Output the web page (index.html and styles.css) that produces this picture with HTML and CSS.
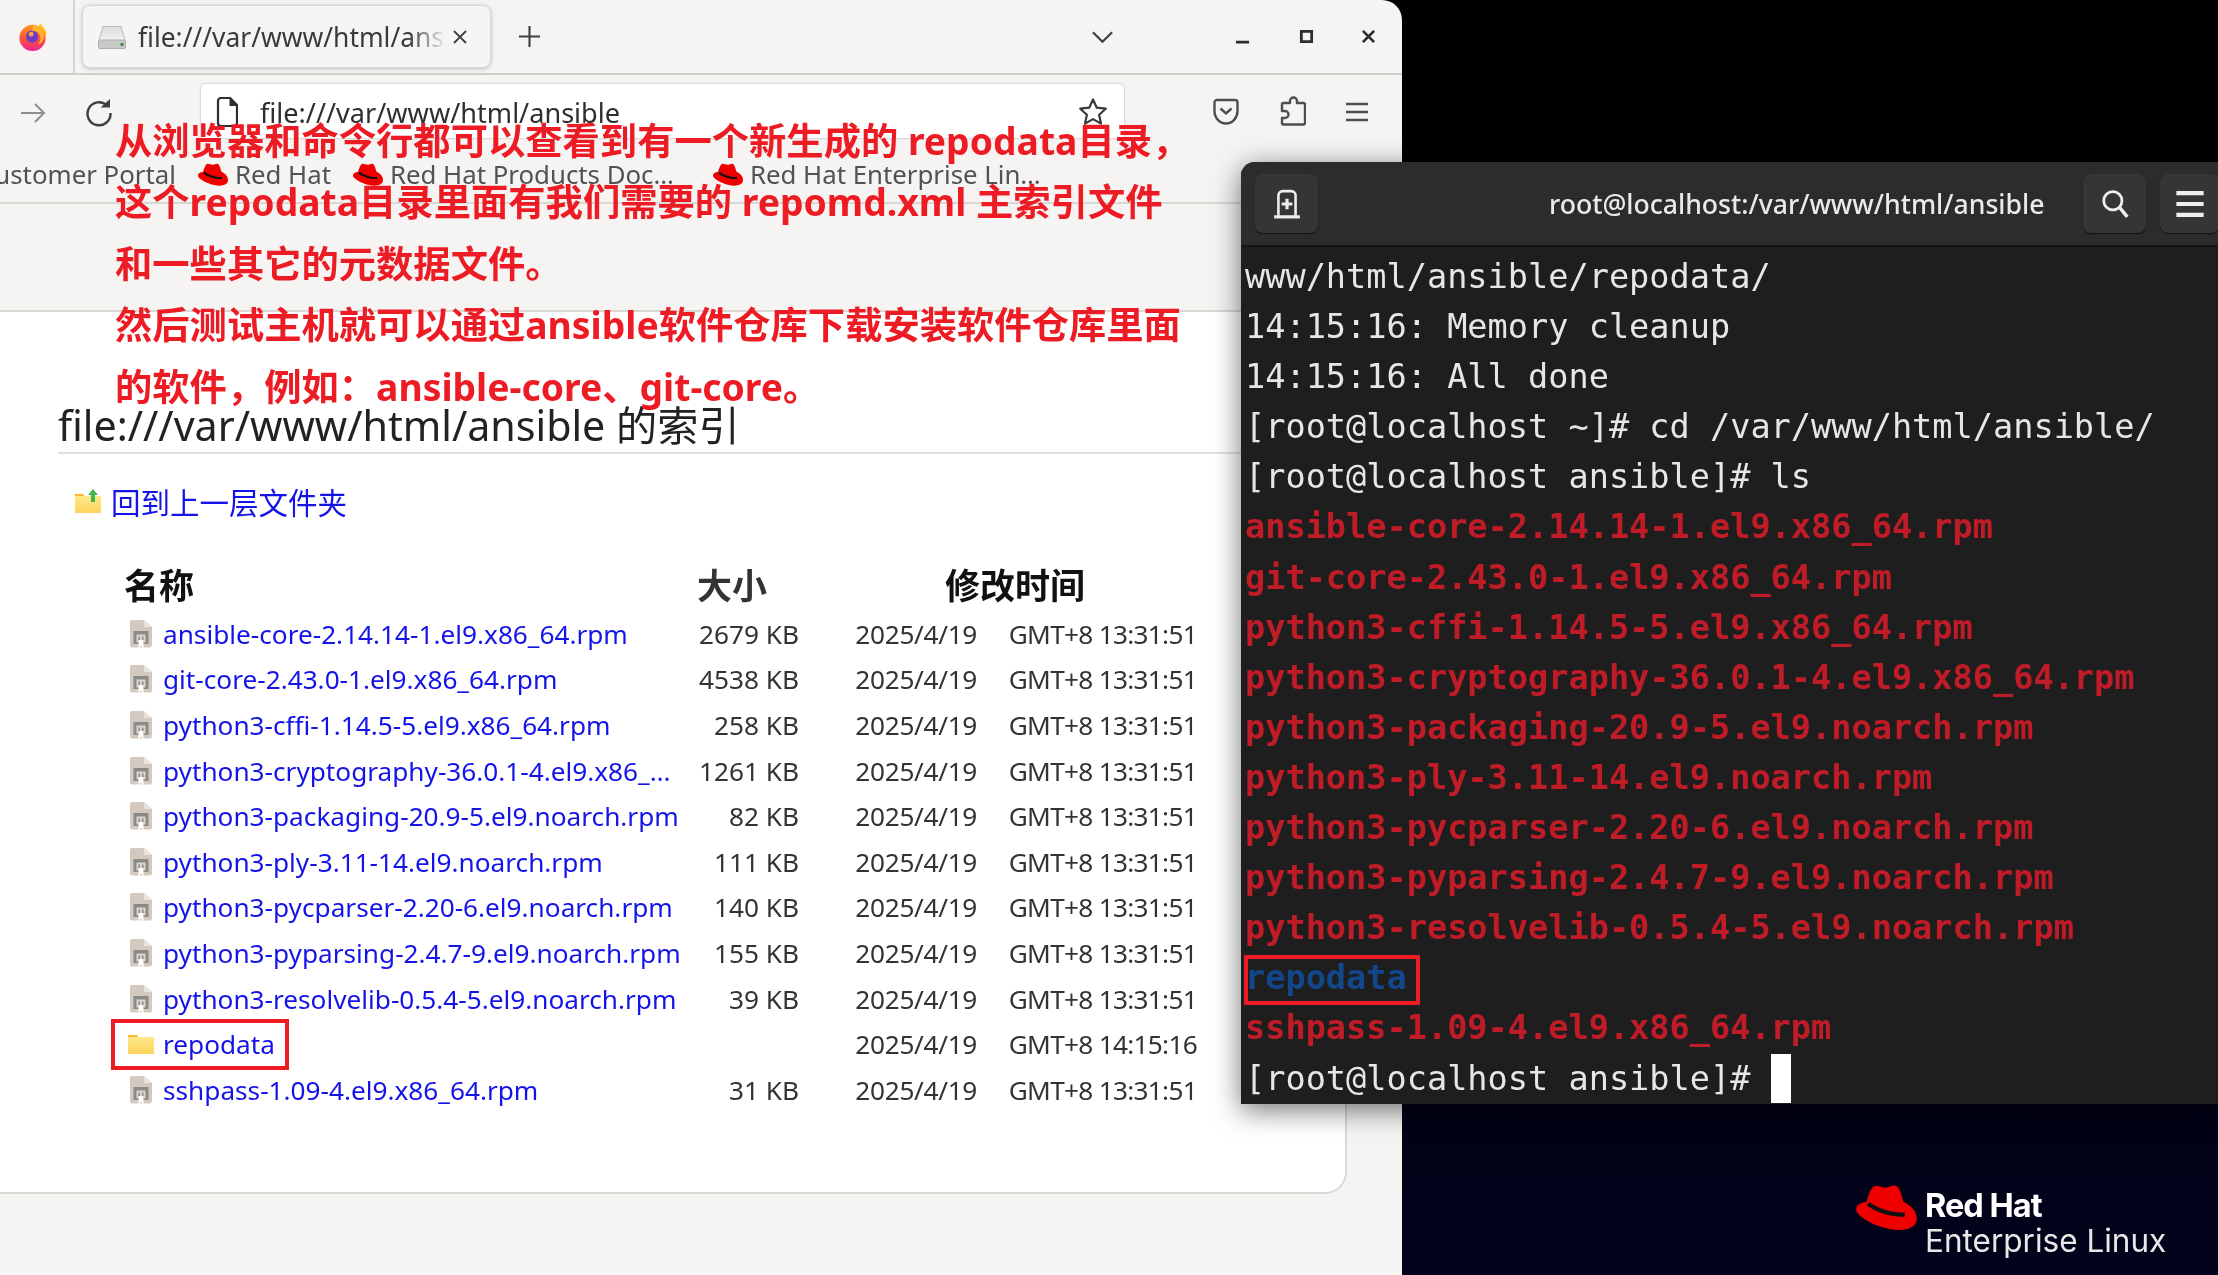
FILE: index.html
```html
<!DOCTYPE html>
<html lang="zh">
<head>
<meta charset="utf-8">
<title>file:///var/www/html/ansible</title>
<link rel="stylesheet" href="styles.css">
</head>
<body>
<svg class="defs" width="0" height="0" aria-hidden="true">
  <defs>
    <linearGradient id="fxBody" x1="0" y1="0" x2="0" y2="1"><stop offset="0" stop-color="#ff9a1f"/><stop offset=".55" stop-color="#ff4f3a"/><stop offset="1" stop-color="#e8259a"/></linearGradient>
    <linearGradient id="folderFill" x1="0" y1="0" x2="0" y2="1"><stop offset="0" stop-color="#ffe98a"/><stop offset="1" stop-color="#fdd35c"/></linearGradient>
    <linearGradient id="driveFill" x1="0" y1="0" x2="0" y2="1"><stop offset="0" stop-color="#dcdcda"/><stop offset="1" stop-color="#f1f1ef"/></linearGradient>
    <symbol id="hat" viewBox="0 0 182 135">
      <path fill="#ee0000" d="M52 5C62-2 75 8 88 8c12 0 20-8 30-6 12 2 18 28 24 48 18 10 40 25 40 52 0 20-22 33-52 33-40 0-90-20-115-40C5 87 0 80 0 72c0-12 15-20 30-20C38 30 42 12 52 5z"/>
      <path fill="none" stroke="#111" stroke-width="13" d="M36 56c25 20 72 36 110 32"/>
    </symbol>
    <symbol id="rpm" viewBox="0 0 24 30">
      <path fill="#d3c9bf" d="M1 2.500 2.500 1H15l8 7v19l-1.500 1.500h-19L1 27z"/>
      <path fill="#e9e3dc" d="M15 1v7h8z"/>
      <path fill="#8a8a88" d="M4.500 12h15v13h-15z"/>
      <path fill="#d9d6d2" d="M7.500 15.500h9v8h-2v-6h-1.500v6h-2v-6H9.500v6h-2z"/>
      <path fill="#fff" d="M9.500 21h5v9h-1.500v-3h-2v3H9.500z"/>
    </symbol>
  </defs>
</svg>

<div class="desktop">
  <section class="browser">
    <header class="tabbar">
      <div class="fx-cell">
        <svg class="fx" viewBox="0 0 32 32"><path fill="#ffc928" d="M23 1c4 3 7 7 8 12l-8 2-3-6c2-3 3-5 3-8z"/><circle cx="15.500" cy="17" r="14" fill="url(#fxBody)"/><circle cx="15" cy="15.500" r="6.500" fill="#6a3cc8"/><path fill="#ffb32a" d="M15 4c6-1 12 3 13 10 0 5-3 9-7 10 3-3 4-7 2-11-2-3-5-4-8-3 1-2 1-4 0-6z"/><circle cx="14" cy="13" r="2.600" fill="#f7a134"/></svg>
      </div>
      <div class="tab">
        <svg class="drive" viewBox="0 0 28 24"><path fill="url(#driveFill)" stroke="#b9b9b7" d="M5 1.500h18l4 14H1z"/><rect x=".5" y="15" width="27" height="8.500" rx="1.500" fill="#c9c9c7" stroke="#adadab"/><rect x="22.500" y="18" width="3" height="3" fill="#3f8f3f"/></svg>
        <span class="tab-title">file:///var/www/html/ansible</span>
        <svg class="ic-close" viewBox="0 0 16 16"><path d="M2 2l12 12M14 2 2 14" stroke="#3f3f3f" stroke-width="1.800" fill="none"/></svg>
      </div>
      <svg class="plus" viewBox="0 0 24 24"><path d="M12 1v22M1 12h22" stroke="#3f3f3f" stroke-width="2.200" fill="none"/></svg>
      <div class="grow"></div>
      <svg class="chev" viewBox="0 0 24 14"><path d="M2 2l10 10L22 2" stroke="#3f3f3f" stroke-width="2.200" fill="none"/></svg>
      <div class="winbtns">
        <svg viewBox="0 0 16 16"><path d="M1 14h14" stroke="#2e2e2e" stroke-width="3" fill="none"/></svg>
        <svg viewBox="0 0 16 16"><path d="M2.500 2.500h11v11h-11z" stroke="#2e2e2e" stroke-width="3" fill="none"/></svg>
        <svg viewBox="0 0 16 16"><path d="M2 2l12 12M14 2 2 14" stroke="#2e2e2e" stroke-width="3" fill="none"/></svg>
      </div>
    </header>

    <nav class="toolbar">
      <svg class="nav-ic fwd" viewBox="0 0 26 24"><path d="M1 12h23M15 3l9 9-9 9" stroke="#8e8e8c" stroke-width="2" fill="none"/></svg>
      <svg class="nav-ic reload" viewBox="0 0 28 28"><path d="M22 6.500A11.500 11.500 0 1 0 25.500 14" stroke="#3f3f3f" stroke-width="2.400" fill="none"/><path d="M15.500 8.500h9.500V0z" fill="#3f3f3f"/></svg>
      <div class="urlbar">
        <svg class="page-ic" viewBox="0 0 22 30"><path d="M2 4a3 3 0 0 1 3-3h9l7 7v18a3 3 0 0 1-3 3H5a3 3 0 0 1-3-3z" fill="#fff" stroke="#2e2e2e" stroke-width="2.200"/><path d="M13.500 1v8h8z" fill="#2e2e2e"/></svg>
        <span class="url-text">file:///var/www/html/ansible</span>
        <svg class="star" viewBox="0 0 30 30"><path d="M15 2.500l3.800 8.200 9 1-6.700 6 1.900 8.900-8-4.500-8 4.500 1.900-8.900-6.700-6 9-1z" fill="#fff" stroke="#3a3a3a" stroke-width="2.200" stroke-linejoin="round"/></svg>
      </div>
      <svg class="pocket" viewBox="0 0 26 28"><path d="M1.500 4.500a2.500 2.500 0 0 1 2.500-2.500h18a2.500 2.500 0 0 1 2.500 2.500V13a11.500 12.500 0 0 1-23 0z" fill="none" stroke="#4a4f54" stroke-width="2.400"/><path d="M7.500 10.500l5.500 5 5.500-5" fill="none" stroke="#4a4f54" stroke-width="2.400"/></svg>
      <svg class="puzzle" viewBox="0 0 26 30"><path d="M10 7V5a3.500 3.500 0 0 1 7 0v2h6.500a1.500 1.500 0 0 1 1.500 1.500V27a1.500 1.500 0 0 1-1.500 1.500h-20A1.500 1.500 0 0 1 2 27v-5h3a3.500 3.500 0 0 0 0-7H2V8.500A1.500 1.500 0 0 1 3.500 7z" fill="none" stroke="#4a4f54" stroke-width="2.400" stroke-linejoin="round"/></svg>
      <svg class="burger" viewBox="0 0 22 20"><path d="M0 2h22M0 10h22M0 18h22" stroke="#4a4f54" stroke-width="2.400" fill="none"/></svg>
    </nav>

    <div class="bookmarks">
      <span class="bm-first">Customer Portal</span>
      <span class="bm"><svg class="bm-hat"><use href="#hat"/></svg>Red Hat</span>
      <span class="bm"><svg class="bm-hat"><use href="#hat"/></svg>Red Hat Products Doc…</span>
      <span class="bm bm-last"><svg class="bm-hat"><use href="#hat"/></svg>Red Hat Enterprise Lin…</span>
    </div>

    <div class="chrome-gap"></div>

    <div class="page-wrap">
      <main class="page">
        <h1 class="index-title">file:///var/www/html/ansible 的索引</h1>
        <a class="up-link" href="#">
          <svg class="up-ic" viewBox="0 0 26 24"><path fill="#f8b92c" d="M0 5h8l2 3H0z"/><path fill="url(#folderFill)" d="M0 7h26v17H0z"/><path fill="#45b649" d="M18 0l5 6h-3v7h-4V6h-3z"/></svg>
          回到上一层文件夹
        </a>
        <div class="listing">
          <div class="row head"><span class="c-name">名称</span><span class="c-size">大小</span><span class="c-mod">修改时间</span></div>
          <div class="row"><a class="c-name" href="#"><svg class="rpm"><use href="#rpm"/></svg><span class="fname">ansible-core-2.14.14-1.el9.x86_64.rpm</span></a><span class="c-size">2679 KB</span><span class="c-date">2025/4/19</span><span class="c-time">GMT+8 13:31:51</span></div>
          <div class="row"><a class="c-name" href="#"><svg class="rpm"><use href="#rpm"/></svg><span class="fname">git-core-2.43.0-1.el9.x86_64.rpm</span></a><span class="c-size">4538 KB</span><span class="c-date">2025/4/19</span><span class="c-time">GMT+8 13:31:51</span></div>
          <div class="row"><a class="c-name" href="#"><svg class="rpm"><use href="#rpm"/></svg><span class="fname">python3-cffi-1.14.5-5.el9.x86_64.rpm</span></a><span class="c-size">258 KB</span><span class="c-date">2025/4/19</span><span class="c-time">GMT+8 13:31:51</span></div>
          <div class="row"><a class="c-name" href="#"><svg class="rpm"><use href="#rpm"/></svg><span class="fname">python3-cryptography-36.0.1-4.el9.x86_64.rpm</span></a><span class="c-size">1261 KB</span><span class="c-date">2025/4/19</span><span class="c-time">GMT+8 13:31:51</span></div>
          <div class="row"><a class="c-name" href="#"><svg class="rpm"><use href="#rpm"/></svg><span class="fname">python3-packaging-20.9-5.el9.noarch.rpm</span></a><span class="c-size">82 KB</span><span class="c-date">2025/4/19</span><span class="c-time">GMT+8 13:31:51</span></div>
          <div class="row"><a class="c-name" href="#"><svg class="rpm"><use href="#rpm"/></svg><span class="fname">python3-ply-3.11-14.el9.noarch.rpm</span></a><span class="c-size">111 KB</span><span class="c-date">2025/4/19</span><span class="c-time">GMT+8 13:31:51</span></div>
          <div class="row"><a class="c-name" href="#"><svg class="rpm"><use href="#rpm"/></svg><span class="fname">python3-pycparser-2.20-6.el9.noarch.rpm</span></a><span class="c-size">140 KB</span><span class="c-date">2025/4/19</span><span class="c-time">GMT+8 13:31:51</span></div>
          <div class="row"><a class="c-name" href="#"><svg class="rpm"><use href="#rpm"/></svg><span class="fname">python3-pyparsing-2.4.7-9.el9.noarch.rpm</span></a><span class="c-size">155 KB</span><span class="c-date">2025/4/19</span><span class="c-time">GMT+8 13:31:51</span></div>
          <div class="row"><a class="c-name" href="#"><svg class="rpm"><use href="#rpm"/></svg><span class="fname">python3-resolvelib-0.5.4-5.el9.noarch.rpm</span></a><span class="c-size">39 KB</span><span class="c-date">2025/4/19</span><span class="c-time">GMT+8 13:31:51</span></div>
          <div class="row"><a class="c-name" href="#"><svg class="rpm folder" viewBox="0 0 26 20"><path fill="#f8b92c" d="M0 1h9l2 3H0z"/><path fill="url(#folderFill)" d="M0 3h26v17H0z"/></svg><span class="fname">repodata</span></a><span class="c-size"></span><span class="c-date">2025/4/19</span><span class="c-time">GMT+8 14:15:16</span><i class="mark mark-page"></i></div>
          <div class="row"><a class="c-name" href="#"><svg class="rpm"><use href="#rpm"/></svg><span class="fname">sshpass-1.09-4.el9.x86_64.rpm</span></a><span class="c-size">31 KB</span><span class="c-date">2025/4/19</span><span class="c-time">GMT+8 13:31:51</span></div>
        </div>
      </main>
    </div>
  </section>

  <div class="note">
    <p>从浏览器和命令行都可以查看到有一个新生成的 repodata目录，</p>
    <p>这个repodata目录里面有我们需要的 repomd.xml 主索引文件</p>
    <p>和一些其它的元数据文件。</p>
    <p>然后测试主机就可以通过ansible软件仓库下载安装软件仓库里面</p>
    <p>的软件，例如：ansible-core、git-core。</p>
  </div>

  <section class="terminal">
    <header class="term-head">
      <div class="term-btn"><svg class="term-ic" viewBox="0 0 24 28"><path d="M4 25V6a4 4 0 0 1 4-4h8a4 4 0 0 1 4 4v19" fill="none" stroke="#eee" stroke-width="2.400"/><path d="M0 26h24" stroke="#eee" stroke-width="3"/><path d="M12 9v10M7 14h10" stroke="#eee" stroke-width="3"/></svg></div>
      <div class="term-title">root@localhost:/var/www/html/ansible</div>
      <div class="term-btn"><svg class="term-ic" viewBox="0 0 26 28"><circle cx="11" cy="11" r="8.500" fill="none" stroke="#eee" stroke-width="2.600"/><path d="M17 17l7.500 9" stroke="#eee" stroke-width="3.200"/></svg></div>
      <div class="term-btn term-btn-last"><svg class="term-ic" viewBox="0 0 20 22"><path d="M0 3h20M0 11h20M0 19h20" stroke="#eee" stroke-width="3"/></svg></div>
    </header>
    <div class="term-body">
      <div class="line">www/html/ansible/repodata/</div>
      <div class="line">14:15:16: Memory cleanup</div>
      <div class="line">14:15:16: All done</div>
      <div class="line">[root@localhost ~]# cd /var/www/html/ansible/</div>
      <div class="line">[root@localhost ansible]# ls</div>
      <div class="line pkg">ansible-core-2.14.14-1.el9.x86_64.rpm</div>
      <div class="line pkg">git-core-2.43.0-1.el9.x86_64.rpm</div>
      <div class="line pkg">python3-cffi-1.14.5-5.el9.x86_64.rpm</div>
      <div class="line pkg">python3-cryptography-36.0.1-4.el9.x86_64.rpm</div>
      <div class="line pkg">python3-packaging-20.9-5.el9.noarch.rpm</div>
      <div class="line pkg">python3-ply-3.11-14.el9.noarch.rpm</div>
      <div class="line pkg">python3-pycparser-2.20-6.el9.noarch.rpm</div>
      <div class="line pkg">python3-pyparsing-2.4.7-9.el9.noarch.rpm</div>
      <div class="line pkg">python3-resolvelib-0.5.4-5.el9.noarch.rpm</div>
      <div class="line dir"><span class="dir-name">repodata<i class="mark mark-term"></i></span></div>
      <div class="line pkg">sshpass-1.09-4.el9.x86_64.rpm</div>
      <div class="line">[root@localhost ansible]# <span class="cursor"></span></div>
    </div>
  </section>

  <div class="brand">
    <svg class="brand-hat"><use href="#hat"/></svg>
    <div class="brand-text"><b>Red Hat</b><span>Enterprise Linux</span></div>
  </div>
</div>
</body>
</html>
```

FILE: styles.css
```css
* { box-sizing: border-box; }
html, body { margin: 0; padding: 0; }
body { width: 2218px; height: 1275px; overflow: hidden; background: #000; font-family: "Noto Sans", "Noto Sans CJK SC", sans-serif; }
.defs { position: absolute; }
svg { display: block; flex: none; }

.desktop { position: relative; width: 2218px; height: 1275px; overflow: hidden; filter: blur(.45px); background: linear-gradient(180deg, #000 0%, #000 12%, #00000f 70%, #02021c 100%); }

/* browser */
.browser { width: 1402px; height: 1275px; display: flex; flex-direction: column; background: #f5f4f2; border-top-right-radius: 20px; overflow: hidden; color: #3a3a3a; font-size: 26.4px; }
.tabbar { height: 75px; flex: none; display: flex; align-items: center; border-bottom: 2px solid #cfcecb; }
.fx-cell { width: 75px; height: 100%; display: flex; align-items: center; padding-left: 18px; border-right: 2px solid #d5d4d1; }
.fx { width: 30px; height: 30px; }
.tab { width: 409px; height: 63px; margin: 0 0 0 7px; display: flex; align-items: center; padding: 0 22px 0 15px; background: #f6f5f3; border: 1px solid #d9d8d5; border-radius: 8px; box-shadow: 0 1px 4px rgba(0,0,0,.22); }
.drive { width: 28px; height: 24px; margin-right: 12px; }
.tab-title { flex: 1; min-width: 0; overflow: hidden; white-space: nowrap; -webkit-mask-image: linear-gradient(90deg, #000 88%, transparent 100%); mask-image: linear-gradient(90deg, #000 88%, transparent 100%); }
.ic-close { width: 16px; height: 16px; margin-left: 6px; }
.plus { width: 23px; height: 23px; margin-left: 27px; }
.grow { flex: 1; }
.chev { width: 23px; height: 14px; margin-right: 121px; }
.winbtns { display: flex; gap: 47px; margin-right: 26px; align-items: center; }
.winbtns svg { width: 15px; height: 15px; }
.winbtns svg:first-child { margin-right: 2px; }

.toolbar { height: 71px; flex: none; display: flex; align-items: flex-start; padding: 8px 0 0 20px; position: relative; }
.nav-ic { margin-top: 16px; }
.fwd { width: 26px; height: 24px; margin-top: 18px; }
.reload { width: 28px; height: 28px; margin-left: 39px; }
.urlbar { width: 925px; height: 56px; margin-left: 87px; display: flex; align-items: center; padding: 2px 16px 0 15px; background: #fff; border: 1px solid #dcdbd8; border-radius: 6px 6px 0 0; box-shadow: 0 0 2px rgba(0,0,0,.1); }
.page-ic { width: 22px; height: 30px; }
.url-text { flex: 1; margin-left: 22px; color: #2f2f2f; font-size: 27.100px; }
.star { width: 30px; height: 30px; }
.pocket { width: 26px; height: 28px; margin: 15px 0 0 88px; }
.puzzle { width: 26px; height: 30px; margin: 13px 0 0 41px; }
.burger { width: 22px; height: 20px; margin: 19px 0 0 40px; }

.bookmarks { height: 58px; flex: none; display: flex; align-items: center; border-bottom: 2px solid #d9d8d5; color: #4f5256; white-space: nowrap; overflow: hidden; font-size: 25.800px; }
.bm-first { margin-left: -22px; }
.bm { display: flex; align-items: center; margin-left: 22px; }
.bm-last { margin-left: 39px; }
.bm-hat { width: 30px; height: 23px; margin-right: 7px; }

.chrome-gap { height: 108px; flex: none; border-bottom: 2px solid #d9d8d5; }

.page-wrap { flex: 1; min-height: 0; }
.page { width: 1347px; height: 882px; background: #fff; border-right: 2px solid #dad9d6; border-bottom: 2px solid #dad9d6; border-bottom-right-radius: 22px; padding-top: 84px; color: #1f1f1f; }
.index-title { margin: 0 58px; height: 58px; font-size: 41.200px; line-height: 58px; font-weight: 400; color: #222; white-space: nowrap; border-bottom: 2px solid #e0e0e0; }
.up-link { display: flex; align-items: center; height: 40px; margin: 27px 0 0 75px; color: #1414e8; text-decoration: none; font-size: 29.500px; }
.up-ic { width: 26px; height: 24px; margin-right: 10px; }

.listing { margin-top: 34px; font-size: 26.200px; }
.row { position: relative; display: grid; grid-template-columns: 559px 116px 178px 220px; align-items: center; height: 45.600px; padding-left: 124px; white-space: nowrap; }
.head { height: 56px; font-size: 35px; font-weight: 700; color: #111; }
.head .c-size { grid-column: 2; justify-self: start; margin-left: 14px; text-align: left; }
.head .c-mod { grid-column: 3 / span 2; margin-left: 146px; }
.c-name { display: flex; align-items: center; min-width: 0; padding-left: 5px; text-decoration: none; color: #1414e8; }
.head .c-name { padding-left: 0; color: #111; }
.rpm { width: 24px; height: 30px; margin-right: 10px; }
.folder { width: 26px; height: 20px; margin: 0 9px 0 -1px; }
.fname { min-width: 0; overflow: hidden; text-overflow: ellipsis; }
.c-size { text-align: right; color: #333; }
.c-date { text-align: right; color: #333; letter-spacing: -.3px; }
.c-time { text-align: right; color: #333; letter-spacing: -.7px; }
.mark { position: absolute; display: block; border: 4px solid #ed1c24; }
.mark-page { left: 111px; top: -2px; width: 178px; height: 51px; }

/* annotation */
.note { position: absolute; left: 115px; top: 110px; color: #ed1c24; font: 700 37.300px/61.400px "Noto Sans", "Noto Sans CJK SC", sans-serif; white-space: nowrap; }
.note p { margin: 0; }

/* terminal */
.terminal { position: absolute; left: 1241px; top: 162px; width: 977px; height: 942px; display: flex; flex-direction: column; background: #1e1e1e; border-radius: 14px 0 0 0; box-shadow: 0 6px 28px rgba(0,0,0,.55); color: #e6e6e6; }
.term-head { height: 85px; flex: none; display: flex; align-items: center; padding-left: 14px; background: #2c2c2c; border-bottom: 2px solid #151515; border-radius: 14px 0 0 0; }
.term-btn { width: 63px; height: 59px; flex: none; display: flex; align-items: center; justify-content: center; background: #353535; border-radius: 8px; box-shadow: 0 1px 1px #111; }
.term-btn-last { width: 60px; margin-left: 14px; margin-right: -2px; }
.term-ic { width: 28px; height: 30px; }
.term-title { flex: 1; padding-left: 231px; font-size: 26.600px; font-weight: 500; white-space: nowrap; color: #eaeaea; }
.term-body { padding: 5px 0 0 4px; font: 400 33.600px/50.100px "DejaVu Sans Mono", monospace; }
.line { height: 50.100px; white-space: pre; }
.pkg { color: #c01c28; font-weight: 700; }
.dir { color: #12488b; font-weight: 700; }
.dir-name { position: relative; display: inline-block; }
.mark-term { left: -1px; top: 2px; width: 176px; height: 50px; }
.cursor { display: inline-block; width: 20px; height: 49px; vertical-align: top; background: #fff; }

/* brand */
.brand { position: absolute; left: 1856px; top: 1185px; display: flex; color: #fff; }
.brand-hat { width: 61px; height: 45px; margin-right: 8px; }
.brand-text { display: flex; flex-direction: column; margin-top: 4px; }
.brand-text b { font: 700 32.500px/34px "Inter", sans-serif; letter-spacing: -1px; }
.brand-text span { font: 400 31.500px/36px "Inter", sans-serif; color: #e8e8e8; }
```
